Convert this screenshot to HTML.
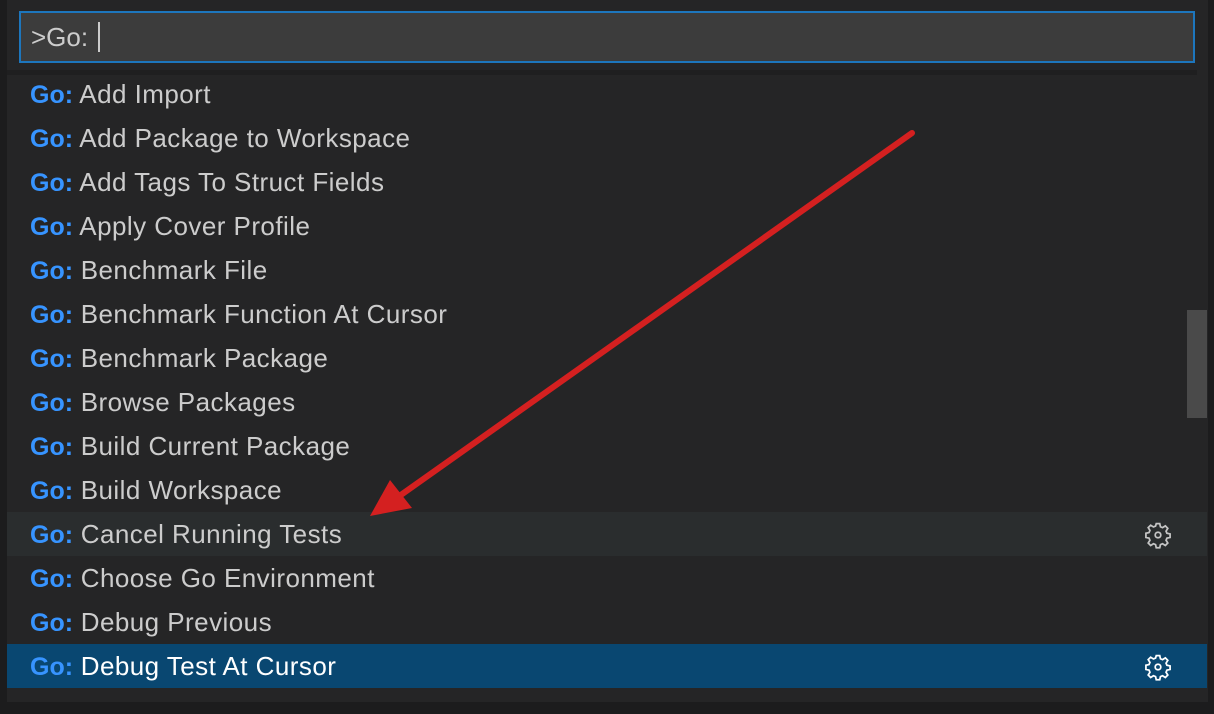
<!DOCTYPE html>
<html><head><style>
html,body{margin:0;padding:0;width:1214px;height:714px;overflow:hidden;background:#1c1c1d;font-family:"Liberation Sans",sans-serif}
#panel{position:absolute;left:7px;top:0;width:1201px;height:702px;background:#252526}
#inp{position:absolute;left:19px;top:11px;width:1172px;height:48px;border:2px solid #1d76bd;background:#3c3c3c;color:#ccc;font-size:26px;line-height:49px;box-sizing:content-box}
#inp span{margin-left:10px}
#cur{display:inline-block;width:2px;height:30px;background:#ccc;vertical-align:middle;margin-left:16px;margin-top:-4px}
#sh{position:absolute;left:7px;top:70px;width:1190px;height:5px;background:#1f1f20}
.row{position:absolute;left:7px;width:1200px;height:44px;line-height:44px;font-size:26px;letter-spacing:0.45px;color:#ccc}
.row b{color:#3794ff;margin-left:23px;letter-spacing:0;font-size:25px;margin-right:0}
.hl{background:#2a2d2e}
.sel{background:#094771;color:#fff}
.gear{position:absolute;left:1136px;top:9px}
#sb{position:absolute;left:1187px;top:310px;width:20px;height:108px;background:#4a4a4a}
</style></head><body>
<div id="panel"></div>
<div id="inp"><span>&gt;Go:</span><span id="cur"></span></div>
<div id="sh"></div>
<div class="row" style="top:72px"><b>Go:</b> Add Import</div>
<div class="row" style="top:116px"><b>Go:</b> Add Package to Workspace</div>
<div class="row" style="top:160px"><b>Go:</b> Add Tags To Struct Fields</div>
<div class="row" style="top:204px"><b>Go:</b> Apply Cover Profile</div>
<div class="row" style="top:248px"><b>Go:</b> Benchmark File</div>
<div class="row" style="top:292px"><b>Go:</b> Benchmark Function At Cursor</div>
<div class="row" style="top:336px"><b>Go:</b> Benchmark Package</div>
<div class="row" style="top:380px"><b>Go:</b> Browse Packages</div>
<div class="row" style="top:424px"><b>Go:</b> Build Current Package</div>
<div class="row" style="top:468px"><b>Go:</b> Build Workspace</div>
<div class="row hl" style="top:512px"><b>Go:</b> Cancel Running Tests<svg class="gear" width="30" height="28" viewBox="0 0 16 16"><path fill="none" stroke="#c5c5c5" stroke-width="1" d="M7 1.5h2l.4 1.8 1.2.5 1.6-1 1.4 1.4-1 1.6.5 1.2 1.8.4v2l-1.8.4-.5 1.2 1 1.6-1.4 1.4-1.6-1-1.2.5-.4 1.8H7l-.4-1.8-1.2-.5-1.6 1-1.4-1.4 1-1.6-.5-1.2-1.8-.4V7l1.8-.4.5-1.2-1-1.6 1.4-1.4 1.6 1 1.2-.5z"/><circle cx="8" cy="8" r="1.6" fill="none" stroke="#c5c5c5"/></svg></div>
<div class="row" style="top:556px"><b>Go:</b> Choose Go Environment</div>
<div class="row" style="top:600px"><b>Go:</b> Debug Previous</div>
<div class="row sel" style="top:644px"><b>Go:</b> Debug Test At Cursor<svg class="gear" width="30" height="28" viewBox="0 0 16 16"><path fill="none" stroke="#fff" stroke-width="1" d="M7 1.5h2l.4 1.8 1.2.5 1.6-1 1.4 1.4-1 1.6.5 1.2 1.8.4v2l-1.8.4-.5 1.2 1 1.6-1.4 1.4-1.6-1-1.2.5-.4 1.8H7l-.4-1.8-1.2-.5-1.6 1-1.4-1.4 1-1.6-.5-1.2-1.8-.4V7l1.8-.4.5-1.2-1-1.6 1.4-1.4 1.6 1 1.2-.5z"/><circle cx="8" cy="8" r="1.6" fill="none" stroke="#fff"/></svg></div>
<div id="sb"></div>
<svg style="position:absolute;left:0;top:0" width="1214" height="714"><line x1="912" y1="133" x2="398" y2="497" stroke="#d42020" stroke-width="6" stroke-linecap="round"/><polygon points="370,516 390,480 412,508" fill="#d42020"/></svg>
</body></html>
